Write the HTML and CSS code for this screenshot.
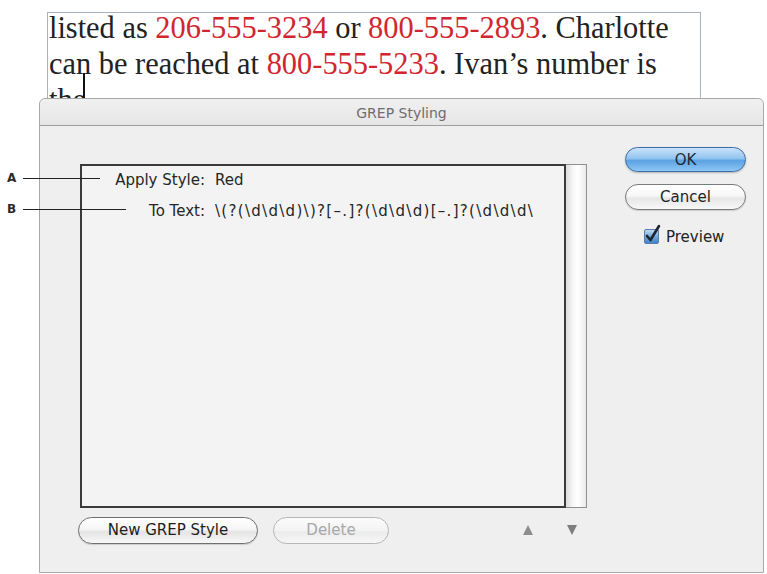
FILE: index.html
```html
<!DOCTYPE html>
<html>
<head>
<meta charset="utf-8">
<link rel="stylesheet" href="styles.css">
</head>
<body>
<div class="page">
  <div class="text-frame">
    <p class="story">listed as <span class="red">206-555-3234</span> or <span class="red">800-555-2893</span>. Charlotte<br>can be reached at <span class="red">800-555-5233</span>. Ivan’s number is<br>the</p>
    <span class="cursor"></span>
  </div>

  <div class="dialog">
    <div class="titlebar">GREP Styling</div>
    <div class="dialog-body">
      <div class="left-col">
        <div class="list-row">
          <div class="list-box">
            <div class="entry entry-style"><span class="lbl">Apply Style:</span><span class="val">Red</span></div>
            <div class="entry entry-text"><span class="lbl">To Text:</span><span class="val regex">\(?(\d\d\d)\)?[–.]?(\d\d\d)[–.]?(\d\d\d\d)</span></div>
          </div>
          <div class="scrollbar"></div>
        </div>
        <div class="bottom-row">
          <button class="btn btn-new">New GREP Style</button>
          <button class="btn btn-delete">Delete</button>
          <span class="spacer"></span>
          <span class="arrow arrow-up"></span>
          <span class="arrow arrow-down"></span>
        </div>
      </div>
      <div class="right-col">
        <button class="btn btn-ok">OK</button>
        <button class="btn btn-cancel">Cancel</button>
        <label class="preview">
          <svg class="check" width="17" height="20" viewBox="0 0 17 20">
            <defs>
              <linearGradient id="cb" x1="0" y1="0" x2="0" y2="1">
                <stop offset="0" stop-color="#c4dcf3"/>
                <stop offset="0.5" stop-color="#74a9dd"/>
                <stop offset="1" stop-color="#3f7fc4"/>
              </linearGradient>
            </defs>
            <rect x="0.5" y="5.5" width="14" height="14" rx="1.5" fill="url(#cb)" stroke="#5a7ea8"/>
            <path d="M3 12 L6.5 16 L15 2" fill="none" stroke="#1b2430" stroke-width="2.6" stroke-linecap="round" stroke-linejoin="round"/>
          </svg>
          <span>Preview</span>
        </label>
      </div>
    </div>
  </div>

  <div class="callout callout-a"><span class="letter">A</span><span class="line"></span></div>
  <div class="callout callout-b"><span class="letter">B</span><span class="line"></span></div>
</div>
</body>
</html>
```

FILE: styles.css
```css
* { box-sizing: border-box; }
html, body {
  margin: 0;
  padding: 0;
  background: #ffffff;
  width: 767px;
  height: 574px;
  overflow: hidden;
}
.page {
  position: relative;
  width: 767px;
  height: 574px;
  padding-top: 12px;
  padding-left: 47px;
}
.text-frame {
  position: relative;
  width: 654px;
  height: 120px;
  border: 1px solid #a9b3bd;
  border-bottom: none;
}
.story {
  margin: 0;
  margin-top: -4px;
  padding-left: 1px;
  font-family: "Liberation Serif", "Times New Roman", serif;
  font-size: 32px;
  line-height: 36px;
  color: #222222;
  white-space: nowrap;
  transform: scaleX(0.95);
  transform-origin: left top;
}
.red { color: #d1262f; }
.cursor {
  position: absolute;
  left: 35px;
  top: 60px;
  width: 1.5px;
  height: 30px;
  background: #111;
}

.dialog {
  position: absolute;
  left: 39px;
  top: 98px;
  width: 725px;
  height: 475px;
  background: #efefef;
  border: 1px solid #a8a8a8;
  border-top-left-radius: 6px;
  border-top-right-radius: 6px;
  font-family: "DejaVu Sans", "Lucida Grande", sans-serif;
  display: flex;
  flex-direction: column;
}
.titlebar {
  height: 27px;
  flex: none;
  background: linear-gradient(#f0f0f0, #e6e6e6);
  border-bottom: 1px solid #9d9d9d;
  border-top-left-radius: 6px;
  border-top-right-radius: 6px;
  text-align: center;
  font-size: 14px;
  line-height: 28px;
  color: #6e6e6e;
}
.dialog-body {
  flex: 1;
  display: flex;
  padding: 38px 0 0 40px;
}
.left-col {
  display: flex;
  flex-direction: column;
}
.list-row {
  display: flex;
  height: 344px;
}
.list-box {
  width: 486px;
  height: 344px;
  border: 2px solid #3a3a3a;
  background: #f3f3f3;
  padding-top: 4px;
  overflow: hidden;
}
.entry {
  display: flex;
  font-size: 15px;
  color: #262626;
  line-height: 20px;
  white-space: nowrap;
  height: 20px;
}
.entry .lbl {
  flex: none;
  width: 123px;
  text-align: right;
}
.entry .val { margin-left: 10px; }
.entry-text { margin-top: 11px; }
.regex {
  display: block;
  width: 318px;
  overflow: hidden;
  letter-spacing: 1.3px;
}
.scrollbar {
  width: 21px;
  height: 344px;
  border: 1px solid #8f8f8f;
  border-left: none;
  background: linear-gradient(90deg, #dcdcdc 0%, #f7f7f7 35%, #ffffff 60%, #eaeaea 100%);
}
.bottom-row {
  display: flex;
  align-items: center;
  margin-top: 8px;
  height: 28px;
  margin-left: -2px;
}
.btn {
  font-family: "DejaVu Sans", "Lucida Grande", sans-serif;
  border-radius: 14px;
  font-size: 15px;
  padding: 0;
  color: #1e1e1e;
  display: flex;
  align-items: center;
  justify-content: center;
}
.btn-new {
  width: 180px;
  height: 27px;
  border: 1.5px solid #6f6f6f;
  background: linear-gradient(#ffffff 0%, #f6f6f6 45%, #e4e4e4 55%, #f7f7f7 100%);
  box-shadow: 0 1px 1px rgba(0,0,0,0.15);
}
.btn-delete {
  width: 116px;
  height: 27px;
  margin-left: 15px;
  border: 1px solid #b6b6b6;
  background: linear-gradient(#fbfbfb 0%, #f3f3f3 50%, #ececec 55%, #f6f6f6 100%);
  color: #a8a8a8;
}
.spacer { width: 134px; }
.arrow {
  width: 0;
  height: 0;
  border-left: 5px solid transparent;
  border-right: 5px solid transparent;
}
.arrow-up { border-bottom: 10px solid #8e8e8e; margin-right: 34px; }
.arrow-down { border-top: 10px solid #7e7e7e; }

.right-col {
  display: flex;
  flex-direction: column;
  padding-left: 38px;
  margin-top: -17px;
}
.btn-ok {
  width: 121px;
  height: 25px;
  border: 1.5px solid #3c6ea6;
  background: linear-gradient(#c9e3fa 0%, #93c4ef 45%, #5ba1e2 55%, #8ec8f5 100%);
  color: #1e2a36;
  box-shadow: 0 1px 2px rgba(0,0,0,0.25);
}
.btn-cancel {
  width: 121px;
  height: 26px;
  margin-top: 12px;
  border: 1.5px solid #7a7a7a;
  background: linear-gradient(#ffffff 0%, #f7f7f7 45%, #e6e6e6 55%, #f8f8f8 100%);
  box-shadow: 0 1px 1px rgba(0,0,0,0.15);
}
.preview {
  display: flex;
  align-items: flex-end;
  margin-top: 14px;
  margin-left: 19px;
  font-size: 15px;
  color: #222;
  gap: 5px;
}
.preview span { line-height: 18px; margin-bottom: -2px; }

.callout {
  position: absolute;
  left: 7px;
  display: flex;
  align-items: center;
  font-family: "DejaVu Sans", sans-serif;
  font-size: 12px;
  font-weight: bold;
  color: #2a2a2a;
  height: 12px;
}
.callout .letter { width: 10px; }
.callout .line {
  display: block;
  height: 1px;
  background: #222;
  margin-left: 6px;
}
.callout-a { top: 172px; }
.callout-a .line { width: 77px; }
.callout-b { top: 203px; }
.callout-b .line { width: 103px; }
```
